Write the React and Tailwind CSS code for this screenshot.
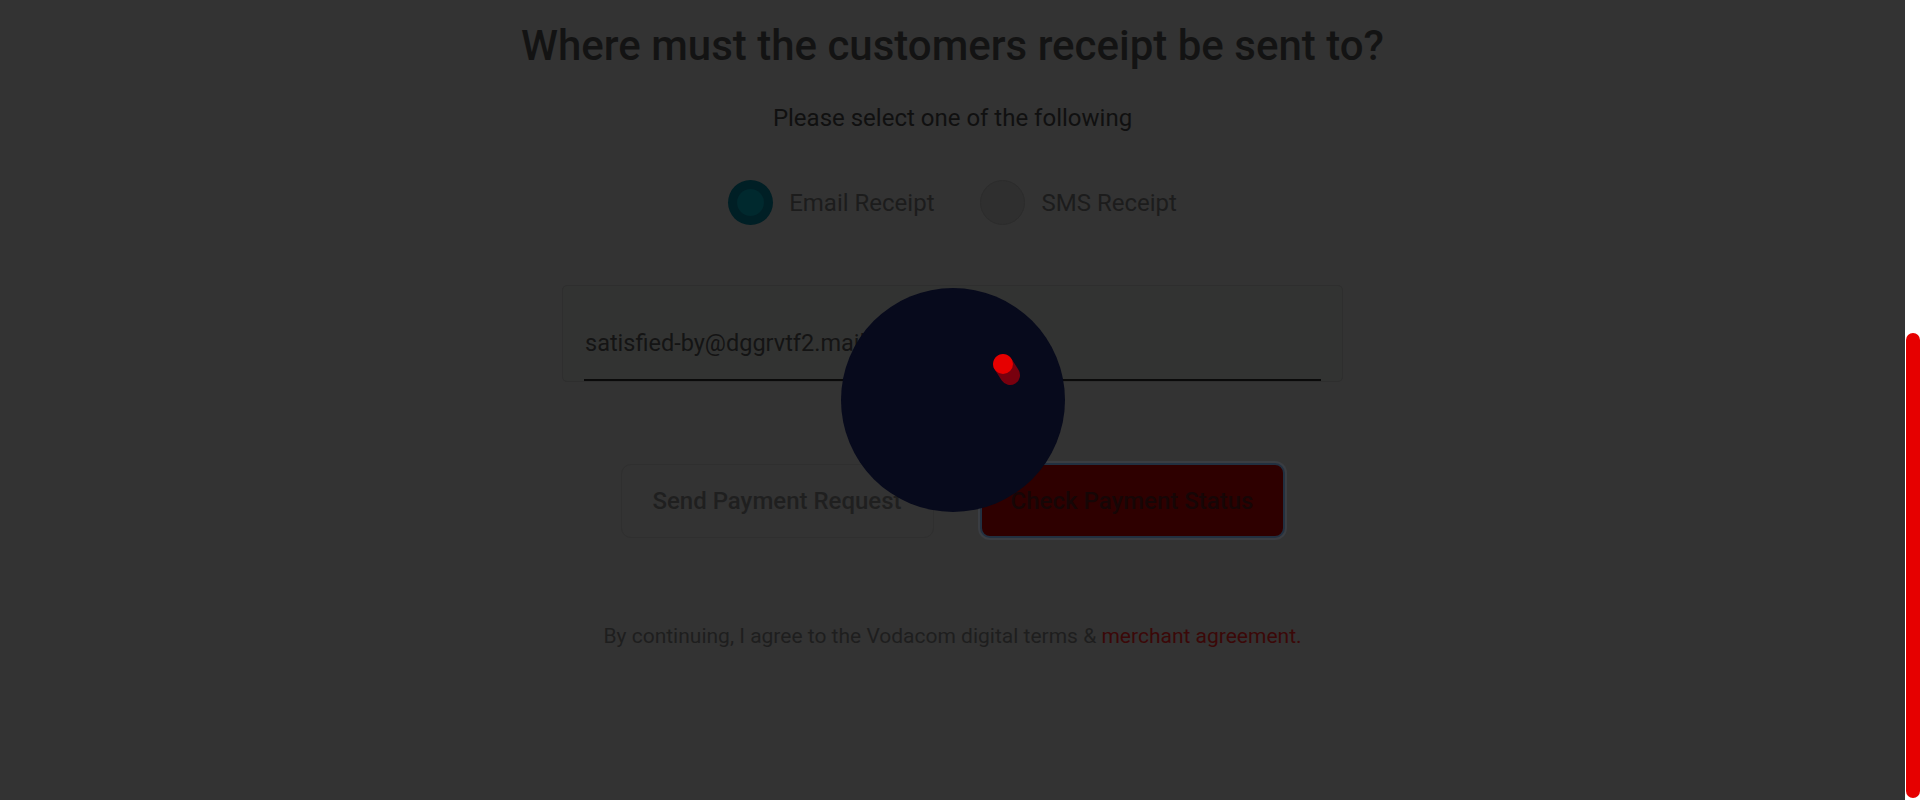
import React from "react";

export default function App() {
  return (
    <div className="flex h-[800px] w-full overflow-hidden" style={{ fontFamily: "Roboto, 'Liberation Sans', sans-serif" }}>
      <div className="relative flex flex-1 flex-col items-center bg-[#333333]">
        <h1 className="mt-[21px] text-[42px] leading-[50px] font-medium text-[#131313]">
          Where must the customers receipt be sent to?
        </h1>
        <p className="mt-[33px] text-[24px] leading-[28px] text-[#101010]">Please select one of the following</p>

        <div className="mt-[48px] flex items-center">
          <div className="flex items-center gap-4">
            <div className="flex h-[45px] w-[45px] items-center justify-center rounded-full bg-[#001f25]">
              <div className="h-[27px] w-[27px] rounded-full bg-[#00292e]" />
            </div>
            <span className="text-[24px] leading-[28px] text-[#1c1c1c]">Email Receipt</span>
          </div>
          <div className="ml-[46px] flex items-center gap-4">
            <div className="h-[45px] w-[45px] rounded-full border border-[#2c2c2c] bg-[#2f2f2f]" />
            <span className="text-[24px] leading-[28px] text-[#1c1c1c]">SMS Receipt</span>
          </div>
        </div>

        <div className="mt-[60px] flex h-[97px] w-[781px] flex-col rounded-[5px] border border-[#2e2e2e] bg-[#323332]">
          <div className="flex-1 px-[22px] pt-[43px] text-[23.5px] leading-[28px] text-[#141414]">satisfied-by@dggrvtf2.mail</div>
          <div className="mx-[21px] h-[2px] bg-[#0a0a0a]" />
        </div>

        <div className="mt-[81px] flex items-center gap-[46px]">
          <button className="h-[74px] w-[313px] rounded-[10px] border border-[#2f2f2f] bg-[#333333] text-[24px] font-medium text-[#1f1f1f]">
            Send Payment Request
          </button>
          <button className="h-[75px] w-[305px] rounded-[10px] border-2 border-[#223040] bg-[#2e0000] text-[24px] font-medium text-[#160606] shadow-[0_0_0_2px_#3a3d42]">
            Check Payment Status
          </button>
        </div>

        <p className="mt-[86px] text-[21px] leading-[24px] text-[#1e1e1e]">
          By continuing, I agree to the Vodacom digital terms &amp; <span className="text-[#3b0808]">merchant agreement.</span>
        </p>

        <div className="absolute left-1/2 top-1/2 h-[224px] w-[224px] -translate-x-1/2 -translate-y-1/2 rounded-full bg-[#070a1c]">
          <svg width="224" height="224" viewBox="0 0 224 224" className="absolute inset-0">
            <line x1="162" y1="76" x2="169" y2="87" stroke="#78000e" strokeWidth="20" strokeLinecap="round" />
            <circle cx="162" cy="76" r="10" fill="#e60000" />
          </svg>
        </div>
      </div>
      <div className="flex w-[15px] flex-col bg-white">
        <div className="mx-auto mt-[333px] h-[465px] w-[14px] rounded-full bg-[#e60000]" />
      </div>
    </div>
  );
}
